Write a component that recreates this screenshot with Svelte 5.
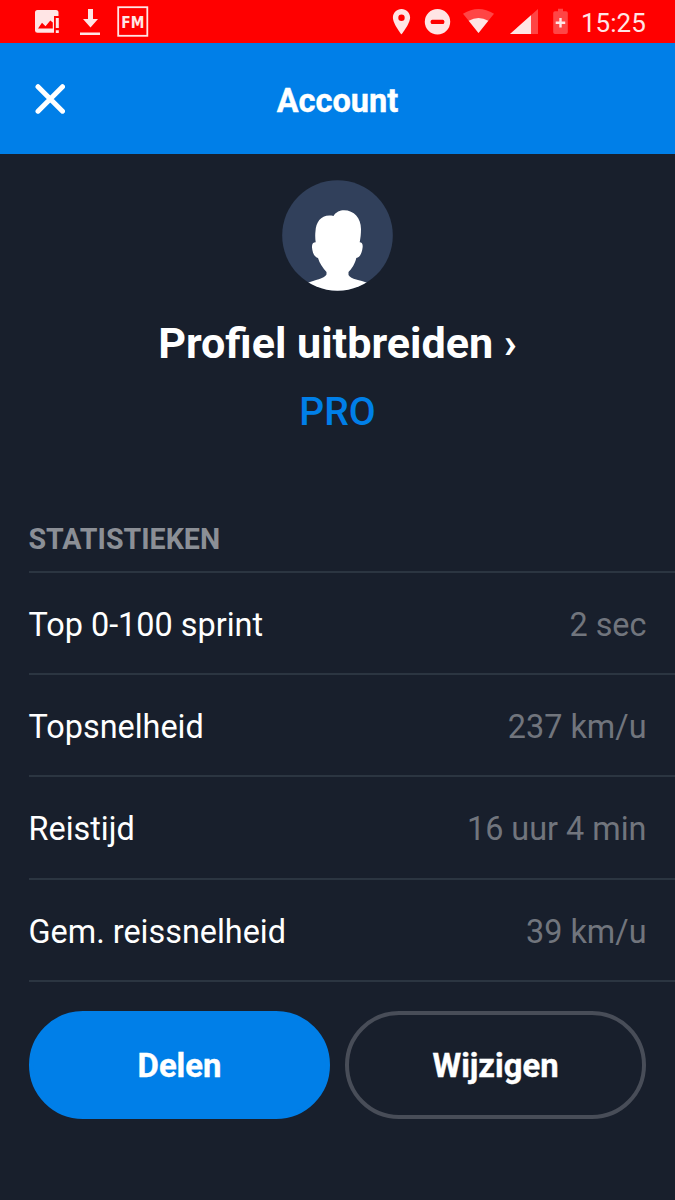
<script>
  const stats = [
    { label: 'Top 0-100 sprint', value: '2 sec' },
    { label: 'Topsnelheid', value: '237 km/u' },
    { label: 'Reistijd', value: '16 uur 4 min' },
    { label: 'Gem. reissnelheid', value: '39 km/u' },
  ]
</script>

<div class="screen">
  <div class="statusBar">
    <svg class="notifications" width="170" height="43" viewBox="0 0 170 43">
      <g fill="#ffe5e5">
        <path
          fill-rule="evenodd"
          d="M37.500 10H56Q58.500 10 58.500 12.500V16H54V32.800H37.500Q35 32.800 35 30.500V12.500Q35 10 37.500 10ZM38 28.500H52.800V22.500L50.300 20.500L45.500 26.300L42 22.800Z"
        />
        <path d="M55.800 18H58.800V28H55.800ZM55.800 30.300H58.800V33H55.800Z" />
        <path d="M88 9H93V19H98L90.500 27.500L83 19H88ZM80 32.500H100V35H80Z" />
      </g>
      <rect x="118.200" y="7.200" width="29.100" height="28.600" fill="none" stroke="#ffe5e5" stroke-width="1.800" />
      <text x="121.300" y="28" class="fm" textLength="23" lengthAdjust="spacingAndGlyphs">FM</text>
    </svg>

    <svg class="system" width="190" height="43" viewBox="385 0 190 43">
      <g fill="#ffe5e5">
        <path
          fill-rule="evenodd"
          d="M401.500 9C396.700 9 392.900 12.800 392.900 17.600C392.900 24 401.500 34.500 401.500 34.500S410.100 24 410.100 17.600C410.100 12.800 406.300 9 401.500 9ZM401.500 14.600A3.200 3.200 0 1 1 401.500 21A3.200 3.200 0 0 1 401.500 14.600Z"
        />
        <circle cx="437.500" cy="21.700" r="12.700" />
        <path d="M478.500 33L463 13.800Q478.500 4.200 494 13.800Z" fill-opacity="0.300" />
        <path d="M478.500 33L468.700 20.800Q478.500 15 488.300 20.800Z" />
        <path d="M538 9V34H510Z" fill-opacity="0.300" />
        <path d="M531 15.200V34H510Z" />
        <path d="M558 8.800H563V11.300H566Q567.800 11.300 567.800 13V32.200Q567.800 34 566 34H555Q553.200 34 553.200 32.200V13Q553.200 11.300 555 11.300H558Z" fill-opacity="0.300" />
        <path d="M559.300 18H561.700V21.500H565.200V23.900H561.700V27.600H559.300V23.900H555.700V21.500H559.300Z" />
      </g>
      <rect x="430.700" y="19.700" width="13.600" height="4.200" rx="1.500" fill="#ff0000" />
    </svg>
    <span class="clock">15:25</span>
  </div>

  <header>
    <button class="close" aria-label="Sluiten">
      <svg width="30" height="30" viewBox="0 0 30 30">
        <path d="M3 2.700L27.500 27.200M27.500 2.700L3 27.200" fill="none" stroke="#fff" stroke-width="5" stroke-linecap="round" />
      </svg>
    </button>
    <h1>Account</h1>
  </header>

  <section class="profile">
    <svg class="avatar" width="111" height="111" viewBox="0 0 111 111">
      <clipPath id="avatarClip"><circle cx="55.500" cy="55.500" r="55.300" /></clipPath>
      <g clip-path="url(#avatarClip)">
        <rect width="111" height="111" fill="#31405b" />
        <path
          fill="#fff"
          d="M51.500 36C54 32 58 30.300 62 30.300C72 30.300 79 38 79 49C79 54 78.500 58 77.700 62.300C80 62.300 81 64 80.600 67.500C80 73 78 77.500 74.300 78C73 84 69.500 89 66.500 92V95C69 99.500 78 100 86 103V112H25V103C33 99.800 42 99 44.500 94.500V92C41 88 37.500 83.500 36 78C32.500 77 30.500 73 30 67.500C29.700 64 31 62.300 33.700 62.300C33.200 59 33 55 33.500 51C34 41.500 40 33.500 51.500 36Z"
        />
      </g>
    </svg>
    <h2>Profiel uitbreiden ›</h2>
    <span class="plan">PRO</span>
  </section>

  <section class="stats">
    <h3>STATISTIEKEN</h3>
    {#each stats as stat}
      <div class="row">
        <span>{stat.label}</span>
        <span class="value">{stat.value}</span>
      </div>
    {/each}
  </section>

  <div class="actions">
    <button class="share">Delen</button>
    <button class="edit">Wijzigen</button>
  </div>
</div>

<style>
  :global(body) {
    background: #181f2c;
  }

  .screen {
    width: 675px;
    height: 1200px;
    overflow: hidden;
    background: #181f2c;
    color: #fff;
    font-family: Roboto, sans-serif;
  }

  .statusBar {
    display: flex;
    align-items: center;
    height: 43px;
    background: #ff0000;
  }

  .system {
    margin-left: auto;
  }

  .fm {
    fill: #ffe5e5;
    font: bold 15px 'DejaVu Sans', sans-serif;
  }

  .clock {
    width: 100px;
    box-sizing: border-box;
    padding: 2px 0 0 6px;
    color: #ffe5e5;
    font-size: 26px;
  }

  header {
    display: grid;
    grid-template-columns: 100px 1fr 100px;
    align-items: center;
    height: 111px;
    background: #007fe8;
  }

  h1,
  h2,
  h3 {
    margin: 0;
  }

  h1 {
    padding-top: 4px;
    font-size: 32.500px;
    font-weight: 700;
    text-align: center;
    -webkit-text-stroke: 0.400px #fff;
  }

  button {
    padding: 0;
    border: none;
    background: none;
    color: inherit;
    font-family: inherit;
  }

  .close {
    display: flex;
    padding-left: 35px;
  }

  .profile {
    display: flex;
    flex-direction: column;
    align-items: center;
    height: 352px;
    box-sizing: border-box;
    padding-top: 26px;
  }

  h2 {
    margin-top: 27px;
    font-size: 43.100px;
    line-height: 52px;
    font-weight: 700;
    white-space: nowrap;
  }

  .plan {
    margin-top: 19px;
    color: #007fe8;
    font-size: 39px;
    line-height: 46px;
    font-weight: 500;
  }

  .stats {
    padding-left: 28.500px;
  }

  h3 {
    height: 65px;
    color: #8b8f96;
    font-size: 28.600px;
    line-height: 66px;
    font-weight: 700;
  }

  .row {
    display: flex;
    align-items: center;
    justify-content: space-between;
    height: 102.200px;
    box-sizing: border-box;
    padding: 4px 28.500px 0 0;
    border-top: 2px solid #2b3541;
    font-size: 32.400px;
  }

  .row:last-child {
    height: 104px;
    border-bottom: 2px solid #2b3541;
  }

  .value {
    color: #71757d;
  }

  .actions {
    display: flex;
    gap: 15px;
    padding: 29px 29px 0;
  }

  .actions button {
    flex: 1;
    box-sizing: border-box;
    width: 0;
    height: 108px;
    padding-top: 3px;
    border: 4px solid #484d58;
    border-radius: 54px;
    font-size: 32.800px;
    font-weight: 700;
    -webkit-text-stroke: 0.400px #fff;
  }

  .actions .share {
    border-color: #007fe8;
    background: #007fe8;
  }
</style>
